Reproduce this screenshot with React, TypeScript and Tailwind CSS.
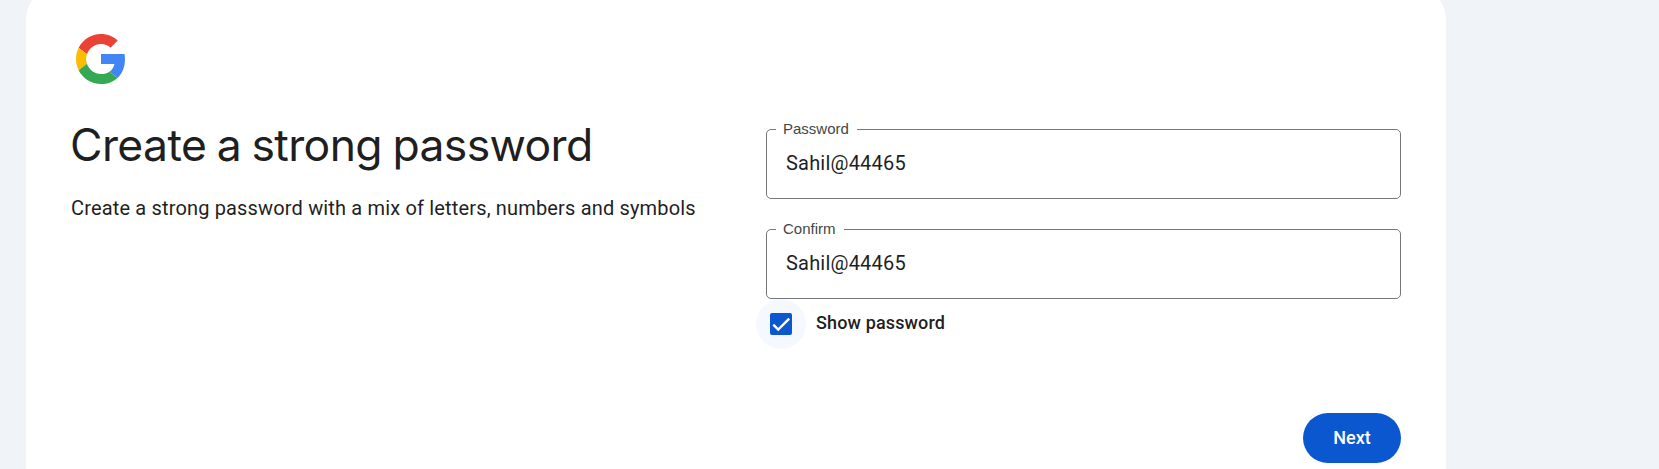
function GoogleLogo() {
  return (
    <svg viewBox="0 0 48 48" className="ml-[5px] block size-[50px]" aria-label="Google">
      <path fill="#EA4335" d="M24 9.5c3.54 0 6.71 1.22 9.21 3.6l6.85-6.85C35.9 2.38 30.47 0 24 0 14.62 0 6.51 5.38 2.56 13.22l7.98 6.19C12.43 13.72 17.74 9.5 24 9.5z" />
      <path fill="#4285F4" d="M46.98 24.55c0-1.57-.15-3.8-.38-5.35H24v9.6h12.94c-.58 2.96-2.26 5.7-4.78 7.4l7.73 6c4.51-4.18 7.09-10.36 7.09-17.65z" />
      <path fill="#FBBC05" d="M10.53 28.59c-.48-1.45-.76-2.99-.76-4.59s.27-3.14.76-4.59l-7.98-6.19C.92 16.46 0 20.12 0 24c0 3.88.92 7.54 2.56 10.78l7.97-6.19z" />
      <path fill="#34A853" d="M24 48c6.48 0 11.93-2.13 15.89-5.81l-7.73-6c-2.15 1.45-4.92 2.3-8.16 2.3-6.26 0-11.57-4.22-13.47-9.91l-7.98 6.19C6.51 42.62 14.62 48 24 48z" />
    </svg>
  );
}

function Field({ label, value }: { label: string; value: string }) {
  return (
    <div className="relative flex h-[70px] items-center rounded-[5px] border border-[#747775] px-[19px]">
      <span className="absolute -top-[10px] left-[9px] bg-white pr-2 pl-[7px] font-['Liberation_Sans',sans-serif] text-[15px] leading-[18px] text-[#444746]">
        {label}
      </span>
      <span className="pb-[2px] text-[20px] leading-[30px] tracking-[0.2px]">{value}</span>
    </div>
  );
}

export default function App() {
  return (
    <div className="h-[469px] overflow-hidden bg-[#f0f4f9] pl-[26px] font-[Roboto,sans-serif] text-[#1f1f1f]">
      <main className="-mt-[15px] h-[520px] w-[1420px] rounded-[35px] bg-white px-[45px] pt-[49px]">
        <GoogleLogo />
        <div className="mt-[30px] flex justify-between">
          <section className="whitespace-nowrap">
            <h1 className="mt-1 -ml-px font-[Inter,sans-serif] text-[44.5px] leading-[55px] font-normal tracking-[-0.62px] [word-spacing:-1.5px]">
              Create a strong password
            </h1>
            <p className="mt-5 text-[20px] leading-[30px] tracking-[0.16px]">
              Create a strong password with a mix of letters, numbers and symbols
            </p>
          </section>
          <section className="mt-[15px] w-[635px]">
            <Field label="Password" value="Sahil@44465" />
            <div className="h-[30px]" />
            <Field label="Confirm" value="Sahil@44465" />
            <label className="-ml-[10px] flex h-[50px] items-center">
              <span className="flex size-[50px] items-center justify-center rounded-full bg-[#f5f9ff]">
                <span className="flex size-[22px] items-center justify-center rounded-[2px] bg-[#0b57d0]">
                  <svg viewBox="0 0 22 22" className="size-[22px]" fill="none" stroke="white" strokeWidth="2.4">
                    <path d="M3.3 11.7 L8.2 16.6 L19.2 5.6" />
                  </svg>
                </span>
              </span>
              <span className="ml-[10px] pb-[2px] text-[18px] leading-[26px] font-medium tracking-[0.14px]">
                Show password
              </span>
            </label>
            <div className="mt-[64px] flex justify-end">
              <button className="h-[50px] w-[98px] rounded-full bg-[#0b57d0] pb-[2px] text-[18px] font-medium text-white">
                Next
              </button>
            </div>
          </section>
        </div>
      </main>
    </div>
  );
}
